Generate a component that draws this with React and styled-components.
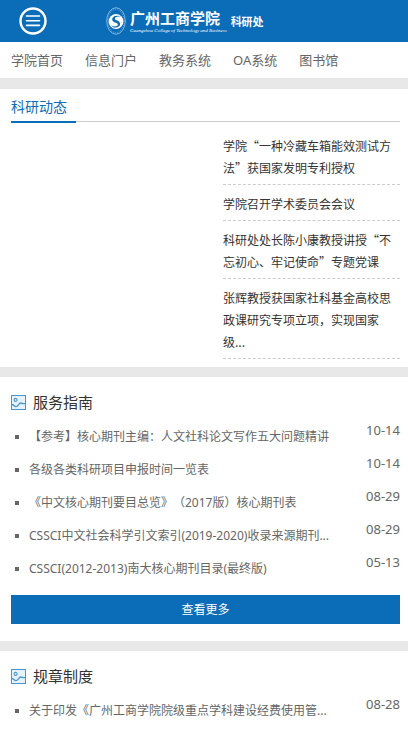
import React from 'react';
import styled, { createGlobalStyle } from 'styled-components';

const navLinks = ['学院首页', '信息门户', '教务系统', 'OA系统', '图书馆'];

const newsList = [
    '学院“一种冷藏车箱能效测试方法”获国家发明专利授权',
    '学院召开学术委员会会议',
    '科研处处长陈小康教授讲授“不忘初心、牢记使命”专题党课',
    '张辉教授获国家社科基金高校思政课研究专项立项，实现国家级...',
];

const guideList = [
    { title: '【参考】核心期刊主编：人文社科论文写作五大问题精讲', date: '10-14' },
    { title: '各级各类科研项目申报时间一览表', date: '10-14' },
    { title: '《中文核心期刊要目总览》（2017版）核心期刊表', date: '08-29' },
    { title: 'CSSCI中文社会科学引文索引(2019-2020)收录来源期刊...', date: '08-29' },
    { title: 'CSSCI(2012-2013)南大核心期刊目录(最终版)', date: '05-13' },
];

const ruleList = [
    { title: '关于印发《广州工商学院院级重点学科建设经费使用管...', date: '08-28' },
];

const MenuIcon = () => (
    <svg width="28" height="28" viewBox="0 0 28 28" fill="none" stroke="#fff">
        <circle cx="14" cy="14" r="12.5" strokeWidth="2.4" />
        <path d="M7.5 9h13M7.5 13.7h13M7.5 18.4h13" strokeWidth="1.6" strokeLinecap="round" />
    </svg>
);

const Emblem = () => (
    <svg width="20" height="28" viewBox="0 0 20 28" fill="none">
        <ellipse cx="10" cy="14" rx="9.3" ry="13.3" stroke="#8fbfe4" strokeWidth="0.9" />
        <ellipse cx="10" cy="14" rx="8.2" ry="11.8" stroke="#5a9fd4" strokeWidth="1.2" strokeDasharray="1 1" />
        <circle cx="10" cy="14.5" r="7.4" fill="#fff" />
        {/* 中间的 S 形 */}
        <path
            d="M15.2 9.6C11.5 7.6 5.8 9 6.2 12.8c.4 3.4 6 2.4 5.6 5-.3 1.8-3.6 2.2-6.6.8 1.2 1.6 3 2.6 5 2.5-1-.1-1.800-.3-2.400-.6 3.400.4 6.400-.8 6.300-3.700-.1-3.800-5.600-3.200-5.200-5.400.3-1.500 3.200-2.100 6.300-1.800z"
            fill="#0b6cb8"
        />
    </svg>
);

const PictureIcon = () => (
    <svg width="15" height="15" viewBox="0 0 15 15" fill="none" stroke="#4a95d0">
        <rect x="0.5" y="0.5" width="14" height="14" fill="#e6f2fb" />
        <circle cx="4.6" cy="4.9" r="1.5" strokeWidth="1.1" />
        <path d="M1 9.5c1.600 0 2.200 2.200 4 2.200 2.200 0 2.600-3.700 4.700-3.700 1.500 0 1.700 1 4.300.6" strokeWidth="1.3" />
    </svg>
);

const ArticleSection = ({ title, items, more }) => (
    <Panel>
        <SectionTitle>
            <PictureIcon />
            {title}
        </SectionTitle>
        <ArticleList>
            {items.map((item) => (
                <ArticleItem key={item.title}>
                    <ArticleLink href="#">{item.title}</ArticleLink>
                    <ArticleDate>{item.date}</ArticleDate>
                </ArticleItem>
            ))}
        </ArticleList>
        {more && <MoreButton type="button">查看更多</MoreButton>}
    </Panel>
);

const App = () => {
    return (
        <Page>
            <GlobalStyle />
            <Header>
                <MenuButton type="button" aria-label="菜单">
                    <MenuIcon />
                </MenuButton>
                <Logo href="#">
                    <Emblem />
                    <School>
                        <SchoolName>广州工商学院</SchoolName>
                        <EnglishName>Guangzhou College of Technology and Business</EnglishName>
                    </School>
                    <Department>科研处</Department>
                </Logo>
            </Header>
            <Nav>
                {navLinks.map((name) => (
                    <NavLink href="#" key={name}>{name}</NavLink>
                ))}
            </Nav>

            <Sections>
                <Panel>
                    <TabBar>
                        <TabTitle>科研动态</TabTitle>
                    </TabBar>
                    <NewsBody>
                        <NewsList>
                            {newsList.map((news) => (
                                <NewsItem key={news}>
                                    <NewsLink href="#">{news}</NewsLink>
                                </NewsItem>
                            ))}
                        </NewsList>
                    </NewsBody>
                </Panel>
                <ArticleSection title="服务指南" items={guideList} more />
                <ArticleSection title="规章制度" items={ruleList} />
            </Sections>
        </Page>
    );
};

export default App;

const GlobalStyle = createGlobalStyle`
    * {
        box-sizing: border-box;
    }

    body {
        margin: 0;
        background: #fff;
        color: #666;
        font-family: 'Noto Sans', 'Noto Sans CJK SC', sans-serif;
        font-size: 12px;
        text-spacing-trim: space-all;
    }

    a {
        color: inherit;
        text-decoration: none;
    }

    ul {
        margin: 0;
        padding: 0;
        list-style: none;
    }

    svg {
        display: block;
        flex: none;
    }
`

const Page = styled.div`
    width: 100%;
`

const Header = styled.header`
    display: flex;
    align-items: center;
    gap: 59px;
    height: 42px;
    padding: 0 19px;
    background: #0b6cb8;
    color: #fff;
`

const MenuButton = styled.button`
    padding: 0;
    border: none;
    background: none;
    cursor: pointer;
`

const Logo = styled.a`
    display: flex;
    align-items: center;
    gap: 4px;
    font-family: 'Liberation Sans', 'Noto Sans CJK SC', sans-serif;
    white-space: nowrap;
`

const School = styled.span`
    display: flex;
    flex-direction: column;
    padding-top: 1px;
`

const SchoolName = styled.span`
    font-size: 15px;
    font-weight: bold;
    line-height: 18px;
`

const EnglishName = styled.span`
    font-family: 'Liberation Serif', serif;
    font-size: 5px;
    font-style: italic;
    line-height: 6px;
`

const Department = styled.span`
    padding-top: 2px;
    font-size: 11px;
    font-weight: bold;
    line-height: 16px;
`

const Nav = styled.nav`
    display: flex;
    gap: 22px;
    padding: 0 11px;
    font-size: 13px;
    line-height: 36px;
    white-space: nowrap;
`

const NavLink = styled.a`
    &:hover {
        color: #0b6cb8;
    }
`

const Sections = styled.main`
    display: flex;
    flex-direction: column;
    gap: 10px;
    padding-top: 11px;
    background: #e8e8e8;
`

const Panel = styled.section`
    padding: 0 8px 0 11px;
    background: #fff;
`

const TabBar = styled.div`
    display: flex;
    padding-top: 4px;
    box-shadow: inset 0 -1px #fff, inset 0 -2px #ccc;
`

const TabTitle = styled.h2`
    margin: 0;
    padding-right: 9px;
    border-bottom: 2px solid #0b6cb8;
    color: #0b6cb8;
    font-size: 14px;
    font-weight: normal;
    line-height: 28px;
`

const NewsBody = styled.div`
    display: flex;
    justify-content: flex-end;
    padding: 4px 0 8px;
`

const NewsList = styled.ul`
    width: 45.5%;
    color: #333;
    font-family: 'Noto Sans CJK SC', sans-serif;
`

const NewsItem = styled.li`
    padding: 8px 0 5px;
    border-bottom: 1px dashed #ccc;
    line-height: 22px;
`

const NewsLink = styled.a`
    display: block;
`

const SectionTitle = styled.h2`
    display: flex;
    align-items: center;
    gap: 7px;
    margin: 0;
    padding-top: 8px;
    color: #333;
    font-size: 15px;
    font-weight: normal;
    line-height: 35px;
`

const ArticleList = styled.ul`
    display: block;
`

const ArticleItem = styled.li`
    display: flex;
    align-items: flex-start;
    justify-content: space-between;

    &::before {
        content: '';
        flex: none;
        width: 4px;
        height: 4px;
        margin: 15px 10px 0 4px;
        background: #666;
    }
`

const ArticleLink = styled.a`
    flex: 1;
    min-width: 0;
    overflow: hidden;
    line-height: 33px;
    text-overflow: ellipsis;
    white-space: nowrap;
`

const ArticleDate = styled.span`
    font-size: 13px;
    line-height: 20px;
`

const MoreButton = styled.button`
    display: block;
    width: 100%;
    margin: 10px 0 17px;
    padding: 0;
    border: none;
    background: #0b6cb8;
    color: #fff;
    font-family: inherit;
    font-size: 12px;
    line-height: 29px;
    cursor: pointer;
`
